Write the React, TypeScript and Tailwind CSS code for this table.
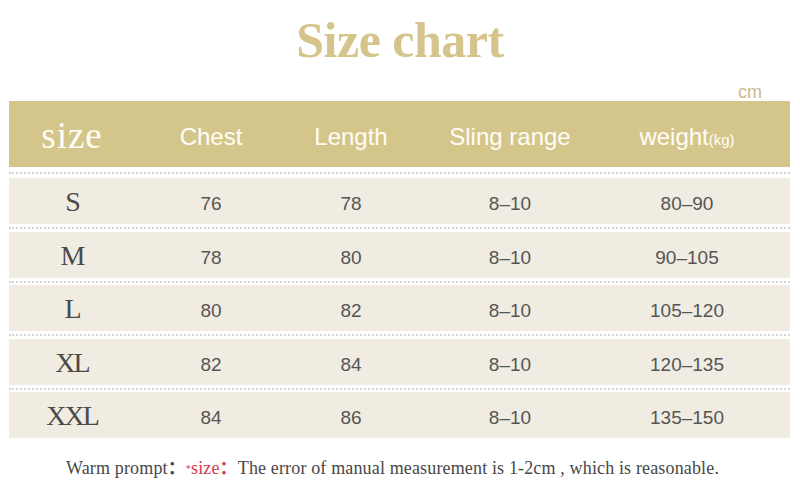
import React from "react";

const rows = [
  { s: "S", c: "76", l: "78", r: "8–10", w: "80–90" },
  { s: "M", c: "78", l: "80", r: "8–10", w: "90–105" },
  { s: "L", c: "80", l: "82", r: "8–10", w: "105–120" },
  { s: "XL", c: "82", l: "84", r: "8–10", w: "120–135" },
  { s: "XXL", c: "84", l: "86", r: "8–10", w: "135–150" },
];

function Sep({ tall }: { tall: boolean }) {
  return (
    <div className={tall ? "flex items-center h-[8px]" : "flex items-center h-[7px]"}>
      <div className="w-full border-t-2 border-dotted border-[#d6d6d6]" />
    </div>
  );
}

function Cell({ children }: { children: React.ReactNode }) {
  return (
    <div className="text-center text-[19px] leading-none pt-[4px] font-['Liberation_Sans',Arial,sans-serif]">
      {children}
    </div>
  );
}

function Head({ children }: { children: React.ReactNode }) {
  return (
    <div className="text-center text-[24px] leading-none pt-[5px] font-['Liberation_Sans',Arial,sans-serif]">
      {children}
    </div>
  );
}

export default function App() {
  return (
    <div className="w-[800px] h-[490px] bg-white overflow-hidden flex flex-col">
      <div className="mt-[15px] h-[50px] text-center text-[50px] leading-[50px] font-bold tracking-[-0.5px] text-[#d5c58c] font-['Liberation_Serif',serif]">
        Size chart
      </div>
      <div className="h-[36px] flex items-end justify-end pr-[38px]">
        <span className="text-[18px] leading-none text-[#c9ba8e] font-['Liberation_Sans',Arial,sans-serif]">
          cm
        </span>
      </div>
      <div className="ml-[9px] w-[781px] flex flex-col">
        <div className="h-[66px] bg-[#d4c68b] grid grid-cols-[126px_152px_128px_190px_164px] items-center text-[#fffdf5]">
          <div className="text-center text-[37px] leading-none tracking-[1px] pt-[2px] font-['Liberation_Serif',serif]">
            size
          </div>
          <Head>Chest</Head>
          <Head>Length</Head>
          <Head>Sling range</Head>
          <Head>
            weight<span className="text-[15px]">(kg)</span>
          </Head>
        </div>
        <div className="flex items-center h-[11px]">
          <div className="w-full border-t-2 border-dotted border-[#d6d6d6]" />
        </div>
        {rows.map((r, i) => (
          <React.Fragment key={r.s}>
            {i > 0 && <Sep tall={i % 2 === 1} />}
            <div className="h-[46px] bg-[#f0ece2] grid grid-cols-[126px_152px_128px_190px_164px] items-center text-[#555555]">
              <div className="text-center text-[28px] leading-none tracking-[-2px] text-[#4a4a4a] pt-[2px] font-['Liberation_Serif',serif]">
                {r.s}
              </div>
              <Cell>{r.c}</Cell>
              <Cell>{r.l}</Cell>
              <Cell>{r.r}</Cell>
              <Cell>{r.w}</Cell>
            </div>
          </React.Fragment>
        ))}
      </div>
      <div className="mt-[21px] pl-[66px] text-[18px] leading-none tracking-[0.15px] text-[#474747] whitespace-nowrap font-['Liberation_Serif','Noto_Sans_CJK_SC',serif]">
        Warm prompt<span className="font-bold">：</span>
        <span className="text-[#d23a4e]">
          <sup className="text-[10px] relative top-[-2px]">*</sup>size<span className="font-bold">：</span>
        </span>
        The error of manual measurement is 1-2cm , which is reasonable.
      </div>
    </div>
  );
}
